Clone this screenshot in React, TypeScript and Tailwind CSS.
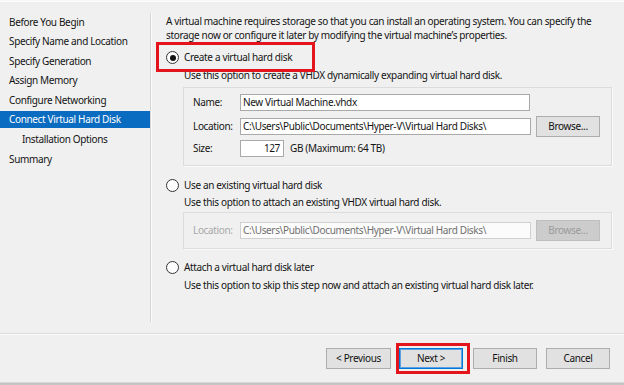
import React from "react";

const FONT = { fontFamily: '"Noto Sans", "Open Sans", sans-serif' };

function Radio({ checked }: { checked?: boolean }) {
  return (
    <div className="w-[13px] h-[13px] rounded-full border border-[#333333] bg-white flex items-center justify-center shrink-0">
      {checked && <div className="w-[6px] h-[6px] rounded-full bg-[#111111]" />}
    </div>
  );
}

function Btn({ children, w = "w-[65px]", primary, disabled }: { children: React.ReactNode; w?: string; primary?: boolean; disabled?: boolean }) {
  return (
    <div
      className={
        "h-[21px] flex items-center justify-center shrink-0 " +
        w +
        " " +
        (disabled
          ? "bg-[#cccccc] border border-[#bfbfbf] text-[#9a9a9a]"
          : primary
          ? "bg-[#e1e1e1] border border-[#0078d7] shadow-[inset_0_0_0_1px_#5aa0e2] text-[#111]"
          : "bg-[#e1e1e1] border border-[#adadad] text-[#111]")
      }
    >
      {children}
    </div>
  );
}

const navItems = [
  "Before You Begin",
  "Specify Name and Location",
  "Specify Generation",
  "Assign Memory",
  "Configure Networking",
  "Connect Virtual Hard Disk",
  "Installation Options",
  "Summary",
];

export default function App() {
  return (
    <div className="w-[624px] h-[385px] bg-[#f0f0f0] flex flex-col overflow-hidden text-[#141414] text-[10px] tracking-[-0.35px]" style={FONT}>
      <div className="h-[2px] bg-[#f7f7f7] border-b border-[#fbfbfb]" />
      <div className="flex h-[331px]">
        {/* nav */}
        <div className="w-[150px] shrink-0 pt-[11.5px] flex flex-col gap-[2.6px]">
          {navItems.map((t, i) => (
            <div
              key={t}
              className={
                "h-[17px] flex items-center whitespace-nowrap " +
                (i === 6 ? "pl-[22px]" : "pl-[9px]") +
                (i === 5 ? " bg-[#0a6cc0] text-white" : "")
              }
            >
              {t}
            </div>
          ))}
        </div>
        {/* separator */}
        <div className="shrink-0 mt-[11px] h-[309px] w-[2px] border-l border-[#d6d6d6] bg-[#fafafa]" />
        {/* content */}
        <div className="flex-1 min-w-0 flex flex-col">
          <div className="pl-[14px] pt-[12px] leading-[14px] whitespace-nowrap">
            <div>A virtual machine requires storage so that you can install an operating system. You can specify the</div>
            <div>storage now or configure it later by modifying the virtual machine’s properties.</div>
          </div>

          {/* option 1 */}
          <div className="relative mt-[7.5px] h-[16px] flex items-center pl-[14px] gap-[5px]">
            <Radio checked />
            <span>Create a virtual hard disk</span>
            <div className="absolute left-[4px] top-[-8px] w-[159px] h-[30px] border-[3px] border-[#e3141c]" />
          </div>
          <div className="mt-[2px] pl-[32px] leading-[14px] whitespace-nowrap">
            Use this option to create a VHDX dynamically expanding virtual hard disk.
          </div>
          <div className="mt-[5.5px] ml-[31px] mr-[12px] h-[79px] border border-[#dcdcdc] shadow-[1px_1px_0_#fafafa] pt-[6px] pl-[9px] flex flex-col">
            <div className="flex items-center h-[17px]">
              <span className="w-[47px] shrink-0">Name:</span>
              <div className="w-[290px] shrink-0 h-[17px] bg-white border border-[#a9a9a9] flex items-center pl-[2px]">New Virtual Machine.vhdx</div>
            </div>
            <div className="flex items-center h-[19px] mt-[6px]">
              <span className="w-[47px] shrink-0">Location:</span>
              <div className="w-[291px] shrink-0 h-[17px] bg-white border border-[#a9a9a9] flex items-center pl-[2px] whitespace-nowrap">
                C:\Users\Public\Documents\Hyper-V\Virtual Hard Disks\
              </div>
              <div className="ml-[5px]">
                <Btn w="w-[64px]">Browse...</Btn>
              </div>
            </div>
            <div className="flex items-center h-[17px] mt-[4px]">
              <span className="w-[47px] shrink-0">Size:</span>
              <div className="w-[44px] shrink-0 h-[17px] bg-white border border-[#a9a9a9] flex items-center justify-end pr-[3px]">127</div>
              <span className="ml-[6px]">GB (Maximum: 64 TB)</span>
            </div>
          </div>

          {/* option 2 */}
          <div className="mt-[11px] h-[16px] flex items-center pl-[14px] gap-[5px]">
            <Radio />
            <span>Use an existing virtual hard disk</span>
          </div>
          <div className="mt-[2px] pl-[32px] leading-[14px] whitespace-nowrap">
            Use this option to attach an existing VHDX virtual hard disk.
          </div>
          <div className="mt-[3px] ml-[31px] mr-[12px] h-[37px] border border-[#dcdcdc] shadow-[1px_1px_0_#fafafa] pl-[9px] flex items-center">
            <span className="w-[47px] shrink-0 text-[#a8a8a8]">Location:</span>
            <div className="w-[291px] shrink-0 h-[17px] bg-[#fbfbfb] border border-[#d0d0d0] flex items-center pl-[2px] whitespace-nowrap text-[#707070]">
              C:\Users\Public\Documents\Hyper-V\Virtual Hard Disks\
            </div>
            <div className="ml-[5px]">
              <Btn w="w-[64px]" disabled>
                Browse...
              </Btn>
            </div>
          </div>

          {/* option 3 */}
          <div className="mt-[10.5px] h-[16px] flex items-center pl-[14px] gap-[5px]">
            <Radio />
            <span>Attach a virtual hard disk later</span>
          </div>
          <div className="mt-[2px] pl-[32px] leading-[14px] whitespace-nowrap">
            Use this option to skip this step now and attach an existing virtual hard disk later.
          </div>
        </div>
      </div>

      {/* bottom separator */}
      <div className="h-[2px] border-t border-[#dcdcdc] bg-[#fbfbfb]" />

      {/* buttons */}
      <div className="flex justify-end pr-[14px] pt-[13px]">
        <Btn>&lt; Previous</Btn>
        <div className="relative ml-[8px]">
          <Btn w="w-[64px]" primary>
            Next &gt;
          </Btn>
          <div className="absolute left-[-3px] top-[-5px] w-[74px] h-[31px] border-[3px] border-[#e3141c]" />
        </div>
        <div className="ml-[10px]">
          <Btn w="w-[64px]">Finish</Btn>
        </div>
        <div className="ml-[9px]">
          <Btn w="w-[64px]">Cancel</Btn>
        </div>
      </div>

      <div className="mt-auto h-[3px] border-t border-[#d8d8d8] bg-[#c4c4c4]" />
    </div>
  );
}
